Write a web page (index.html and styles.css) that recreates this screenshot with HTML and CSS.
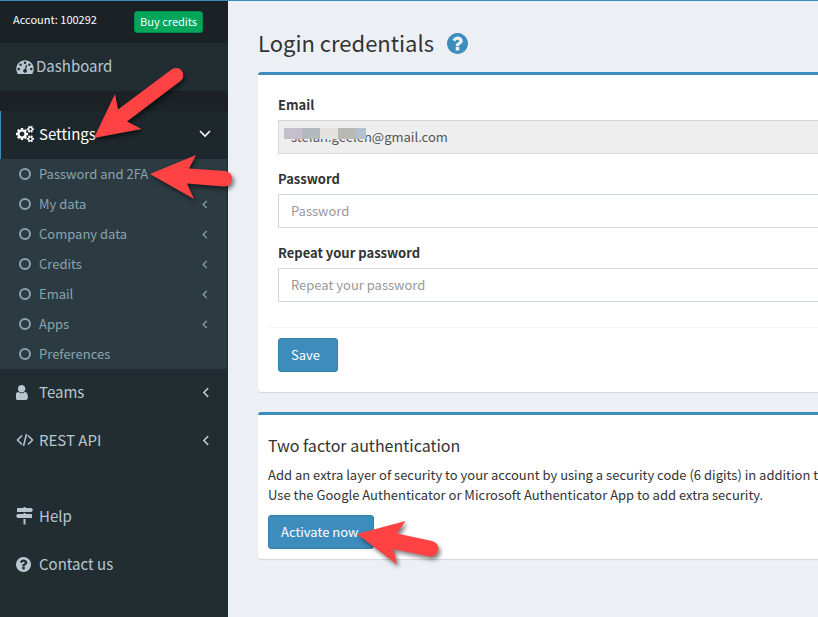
FILE: index.html
```html
<!DOCTYPE html>
<html lang="en">
<head>
<meta charset="utf-8">
<title>Login credentials</title>
<link rel="stylesheet" href="styles.css">
</head>
<body>
<svg class="defs" aria-hidden="true">
  <symbol id="question" viewBox="128 128 1536 1536"><path d="M1024 1376v-192q0-14-9-23t-23-9h-192q-14 0-23 9t-9 23v192q0 14 9 23t23 9h192q14 0 23-9t9-23zm256-672q0-88-55.5-163t-138.5-116-170-41q-243 0-371 213-15 24 8 42l132 100q7 6 19 6 16 0 25-12 53-68 86-92 34-24 86-24 48 0 85.5 26t37.5 59q0 38-20 61t-68 45q-63 28-115.500 86.500t-52.500 125.500v36q0 14 9 23t23 9h192q14 0 23-9t9-23q0-19 21.500-49.500t54.500-49.500q32-18 49-28.500t46-35 44.500-48 28-60.500 12.500-81zm384 192q0 209-103 385.500t-279.500 279.500-385.500 103-385.500-103-279.500-279.500-103-385.500 103-385.500 279.500-279.500 385.500-103 385.500 103 279.500 279.500 103 385.500z"/></symbol>
  <symbol id="angle-left" viewBox="0 0 6 10"><path d="M5 1 1 5l4 4" fill="none" stroke="currentColor" stroke-width="1.4"/></symbol>
  <symbol id="circle" viewBox="0 0 12 12"><circle cx="6" cy="6" r="5" fill="none" stroke="currentColor" stroke-width="2"/></symbol>
</svg>
<div class="page">
  <aside class="sidebar">
    <div class="account">
      <span>Account: 100292</span>
      <button class="buy" type="button">Buy credits</button>
    </div>
    <nav>
      <a class="item item-tight" href="#"><svg class="icon icon-wide" viewBox="0 128 1792 1536"><path d="M384 1152q0-53-37.500-90.500t-90.500-37.500-90.500 37.500-37.500 90.500 37.500 90.500 90.500 37.500 90.500-37.500 37.500-90.500zm192-448q0-53-37.500-90.500t-90.500-37.500-90.500 37.500-37.500 90.500 37.500 90.500 90.500 37.500 90.500-37.500 37.500-90.500zm428 481l101-382q6-26-7.500-48.500t-38.500-29.500-48 6.500-30 39.500l-101 382q-60 5-107 43.500t-63 98.500q-20 77 20 146t117 89 146-20 89-117q16-60-6-117t-72-91zm660-33q0-53-37.500-90.500t-90.500-37.500-90.500 37.500-37.500 90.500 37.500 90.500 90.500 37.500 90.500-37.500 37.500-90.500zm-640-640q0-53-37.500-90.500t-90.500-37.500-90.500 37.500-37.500 90.500 37.500 90.500 90.500 37.500 90.500-37.500 37.500-90.500zm448 192q0-53-37.500-90.500t-90.500-37.500-90.500 37.500-37.500 90.500 37.500 90.500 90.500 37.500 90.500-37.500 37.500-90.500zm320 448q0 261-141 483-19 29-54 29h-1402q-35 0-54-29-141-221-141-483 0-182 71-348t191-286 286-191 348-71 348 71 286 191 191 286 71 348z"/></svg>Dashboard</a>
      <div class="divider"></div>
      <a class="item item-active" href="#"><svg class="icon icon-wide" viewBox="-64 0 1920 1792"><path d="M832 896q0-106-75-181t-181-75-181 75-75 181 75 181 181 75 181-75 75-181zm768 512q0-52-38-90t-90-38-90 38-38 90q0 53 37.500 90.500t90.500 37.500 90.500-37.500 37.500-90.500zm0-1024q0-52-38-90t-90-38-90 38-38 90q0 53 37.500 90.500t90.500 37.500 90.500-37.500 37.500-90.500zm-384 421v185q0 10-7 19.500t-16 10.500l-155 24q-11 35-32 76 34 48 90 115 7 11 7 20 0 12-7 19-23 30-82.500 89.500t-78.500 59.500q-11 0-21-7l-115-90q-37 19-77 31-11 108-23 155-7 24-30 24h-186q-11 0-20-7.500t-10-17.500l-23-153q-34-10-75-31l-118 89q-7 7-20 7-11 0-21-8-144-133-144-160 0-9 7-19 10-14 41-53t47-61q-23-44-35-82l-152-24q-10-1-17-9.500t-7-19.500v-185q0-10 7-19.500t16-10.500l155-24q11-35 32-76-34-48-90-115-7-11-7-20 0-12 7-20 22-30 82-89t79-59q11 0 21 7l115 90q34-18 77-32 11-108 23-154 7-24 30-24h186q11 0 20 7.500t10 17.500l23 153q34 10 75 31l118-89q8-7 20-7 11 0 21 8 144 133 144 160 0 8-7 19-12 16-42 54t-45 60q23 48 34 82l152 23q10 2 17 10.500t7 19.500zm640 533v140q0 16-149 31-12 27-30 52 51 113 51 138 0 4-4 7-122 71-124 71-8 0-46-47t-52-68q-20 2-30 2t-30-2q-14 21-52 68t-46 47q-2 0-124-71-4-3-4-7 0-25 51-138-18-25-30-52-149-15-149-31v-140q0-16 149-31 13-29 30-52-51-113-51-138 0-4 4-7 4-2 35-20t59-34 30-16q8 0 46 46.500t52 67.500q20-2 30-2t30 2q51-71 92-112l6-2q4 0 124 70 4 3 4 7 0 25-51 138 17 23 30 52 149 15 149 31zm0-1024v140q0 16-149 31-12 27-30 52 51 113 51 138 0 4-4 7-122 71-124 71-8 0-46-47t-52-68q-20 2-30 2t-30-2q-14 21-52 68t-46 47q-2 0-124-71-4-3-4-7 0-25 51-138-18-25-30-52-149-15-149-31v-140q0-16 149-31 13-29 30-52-51-113-51-138 0-4 4-7 4-2 35-20t59-34 30-16q8 0 46 46.500t52 67.500q20-2 30-2t30 2q51-71 92-112l6-2q4 0 124 70 4 3 4 7 0 25-51 138 17 23 30 52 149 15 149 31z"/></svg>Settings<svg class="open" viewBox="0 0 12 8"><path d="m1 1 5 5 5-5" fill="none" stroke="currentColor" stroke-width="1.6"/></svg></a>
      <div class="submenu">
        <a href="#"><svg class="dot"><use href="#circle"/></svg>Password and 2FA</a>
        <a href="#"><svg class="dot"><use href="#circle"/></svg>My data<svg class="angle"><use href="#angle-left"/></svg></a>
        <a href="#"><svg class="dot"><use href="#circle"/></svg>Company data<svg class="angle"><use href="#angle-left"/></svg></a>
        <a href="#"><svg class="dot"><use href="#circle"/></svg>Credits<svg class="angle"><use href="#angle-left"/></svg></a>
        <a href="#"><svg class="dot"><use href="#circle"/></svg>Email<svg class="angle"><use href="#angle-left"/></svg></a>
        <a href="#"><svg class="dot"><use href="#circle"/></svg>Apps<svg class="angle"><use href="#angle-left"/></svg></a>
        <a href="#"><svg class="dot"><use href="#circle"/></svg>Preferences</a>
      </div>
      <a class="item" href="#"><svg class="icon" viewBox="320 128 1536 1536"><path d="M1536 1399q0 109-62.500 187t-150.500 78h-854q-88 0-150.500-78t-62.500-187q0-85 8.500-160.500t31.500-152 58.500-131 94-89 134.500-34.500q131 128 313 128t313-128q76 0 134.500 34.500t94 89 58.500 131 31.500 152 8.500 160.500zm-256-887q0 159-112.500 271.500t-271.500 112.500-271.500-112.500-112.500-271.500 112.500-271.500 271.500-112.500 271.500 112.500 112.500 271.500z"/></svg>Teams<svg class="angle angle-large"><use href="#angle-left"/></svg></a>
      <a class="item" href="#"><svg class="icon icon-wide" viewBox="0 0 18 16"><path d="M6 3.500 1.500 8 6 12.500M12 3.500 16.500 8 12 12.500M10.500 2 7.500 14" fill="none" stroke="currentColor" stroke-width="1.500"/></svg>REST API<svg class="angle angle-large"><use href="#angle-left"/></svg></a>
      <div class="gap"></div>
      <a class="item" href="#"><svg class="icon icon-wide" viewBox="0 0 18 18"><path d="M7.500 0h2v1H15.500l1.500 2-1.500 2H1.500Q1 5 1 4.500v-3Q1 1 1.500 1h6zM7.500 6h2v1H15.500q.5 0 .5.500v3q0 .5-.5.500H1.500L0 9l1.500-2h6zM7.500 12h2v5.500h-2z"/></svg>Help</a>
      <a class="item" href="#"><svg class="icon"><use href="#question"/></svg>Contact us</a>
    </nav>
  </aside>
  <main class="content">
    <header class="heading">
      <h1>Login credentials</h1>
      <a class="help" href="#" aria-label="Help"><svg><use href="#question"/></svg></a>
    </header>
    <form class="box">
      <div class="fields">
        <label for="email">Email</label>
        <div class="masked">
          <input id="email" type="text" value="stefan.geelen@gmail.com" disabled>
          <div class="mosaic"><i class="m1"></i><i class="m2"></i><i class="m3"></i><i class="m4"></i><i class="m5"></i></div>
        </div>
        <label for="password">Password</label>
        <input id="password" type="password" placeholder="Password">
        <label for="repeat">Repeat your password</label>
        <input id="repeat" type="password" placeholder="Repeat your password">
      </div>
      <div class="footer"><button class="primary save" type="button">Save</button></div>
    </form>
    <section class="box two-factor">
      <h2>Two factor authentication</h2>
      <p>Add an extra layer of security to your account by using a security code (6 digits) in addition to your password.<br>Use the Google Authenticator or Microsoft Authenticator App to add extra security.</p>
      <button class="primary activate" type="button">Activate now</button>
    </section>
  </main>
  <svg class="arrows" width="818" height="617" viewBox="0 0 818 617" aria-hidden="true">
    <path d="M94 138 115 94l3 15.500L171.500 69.500a7 7 0 0 1 9 11.500L127 121.500 141.500 129z"/>
    <path d="M150 174 196 155l-7 13.500 36 2.500a7.500 7.500 0 0 1-1 15.500L187 183.500l7 15.500z"/>
    <path d="M357 534 405.500 521 397 533.500l35 7.500a7.500 7.500 0 0 1-3 15.500L393.500 549l3.500 15.500z"/>
  </svg>
</div>
</body>
</html>
```
FILE: styles.css
```css
* { box-sizing: border-box; }

body {
  margin: 0;
  font-family: "Noto Sans CJK SC", "Noto Sans", sans-serif;
  font-size: 13px;
  line-height: 20px;
  color: #333;
  background: #ecf0f5;
  overflow: hidden;
}

a { color: inherit; text-decoration: none; }
svg { fill: currentColor; flex: none; }
input, button { font: inherit; }
.defs { position: absolute; width: 0; height: 0; }

.page {
  position: relative;
  display: flex;
  min-height: 100vh;
  border-top: 1px solid #3c8dbc;
}

.sidebar {
  flex: none;
  width: 228px;
  background: #222d32;
  color: #b8c7ce;
}

.account {
  display: flex;
  align-items: center;
  justify-content: space-between;
  height: 42px;
  padding: 0 25px 0 13px;
  background: #1a2226;
  color: #fff;
  font-size: 11px;
}
.account span { padding-bottom: 6px; }

.buy {
  height: 22px;
  padding: 0 5px 2px;
  border: 1px solid #008d4c;
  border-radius: 3px;
  background: #00a65a;
  color: #fff;
  line-height: 18px;
}

.item {
  display: flex;
  align-items: center;
  height: 48px;
  padding: 0 18px 2px 16px;
  gap: 5px;
  font-size: 15px;
}
.item-tight { gap: 2px; }
.item-active {
  background: #1e282c;
  color: #fff;
  box-shadow: inset 1px 0 #3c8dbc;
}
.icon { width: 15px; height: 15px; margin-right: 3px; }
.icon-wide { width: 18px; height: 18px; margin-right: 0; }
.item-tight .icon { height: 15px; }
.open { width: 12px; height: 8px; margin-left: auto; }
.item-active { padding-right: 17px; }
.divider { height: 20px; background: #1a2226; }
.gap { height: 28px; }

.submenu {
  margin-right: 1px;
  background: #2c3b41;
  color: #8aa4af;
}
.submenu a {
  display: flex;
  align-items: center;
  height: 30px;
  padding: 0 19px;
  gap: 8px;
}
.dot { width: 12px; height: 12px; }
.angle { width: 6px; height: 9px; margin-left: auto; }
.angle-large { width: 8px; height: 11px; }

.content {
  flex: 1 0 0;
  min-width: 0;
  margin-right: -40px;
  padding-left: 30px;
}

.heading {
  display: flex;
  align-items: center;
  gap: 13px;
  height: 71px;
  padding-top: 14px;
}
h1, h2 { margin: 0; font-weight: 400; }
h1 { padding-bottom: 3px; font-size: 22px; line-height: 28px; }
.help { color: #3c8dbc; }
.help svg { display: block; width: 21px; height: 21px; }

.box {
  margin-bottom: 20px;
  border-top: 3px solid #3c8dbc;
  border-radius: 3px;
  background: #fff;
  box-shadow: 0 1px 1px rgba(0, 0, 0, 0.1);
}
.fields { padding: 20px 20px 10px; }
label { display: block; margin-bottom: 5px; font-weight: 700; }

input {
  display: block;
  width: 100%;
  height: 34px;
  margin-bottom: 15px;
  padding: 0 12px 2px;
  border: 1px solid #d2d6de;
  background: #fff;
  color: #555;
}
input:disabled { background: #eee; }
input::placeholder { color: #999; }

.masked { position: relative; }
.mosaic {
  position: absolute;
  top: 8px;
  left: 6px;
  display: flex;
  height: 11px;
}
.mosaic i { width: 18px; }
.mosaic .m1 { background: #c5becb; }
.mosaic .m2 { background: #b3babd; }
.mosaic .m3 { background: #e3e2e0; }
.mosaic .m4 { background: #b8b9b3; }
.mosaic .m5 { width: 10px; background: #b3c0ce; }

.footer {
  margin-left: 10px;
  padding: 10px 10px 20px;
  border-top: 1px solid #f4f4f4;
}

.primary {
  height: 34px;
  padding: 0 12px;
  border: 1px solid #367fa9;
  border-radius: 3px;
  background: #3c8dbc;
  color: #fff;
  text-align: left;
}
.save { width: 60px; }
.activate { width: 106px; }

.two-factor { padding: 20px 10px 10px; }
h2 { font-size: 16px; line-height: 20px; }
p { margin: 10px 0; white-space: nowrap; }

.arrows {
  position: absolute;
  top: -1px;
  left: 0;
  color: #ff4344;
  filter: drop-shadow(2px 3px 2px rgba(0, 0, 0, 0.5));
  pointer-events: none;
}
```
